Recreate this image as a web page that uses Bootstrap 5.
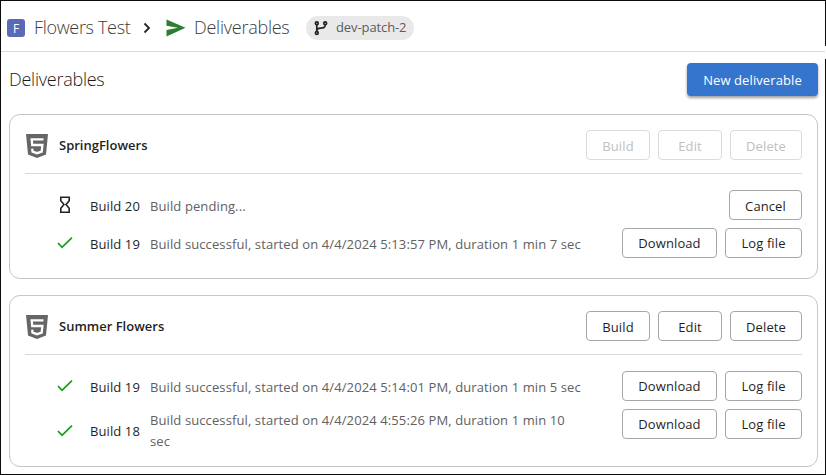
<!DOCTYPE html>
<html lang="en">
<head>
<meta charset="utf-8">
<meta name="viewport" content="width=device-width, initial-scale=1">
<title>Deliverables</title>
<link href="https://cdn.jsdelivr.net/npm/bootstrap@5.3.0/dist/css/bootstrap.min.css" rel="stylesheet">
<style>
body { font-family: "Open Sans", "Noto Sans", sans-serif; font-size: 13px; color: #1f1f1f; background: #fff; }
.frame { width: 826px; height: 475px; border: 1px solid #0b0b0b; border-right: 0; overflow: hidden; }
.edge { top: 0; right: 0; width: 1px; height: 100%; background: linear-gradient(#0b0b0b 45px, #fff 45px, #fff 58px, #0b0b0b 58px); }
.topbar { height: 51px; border-bottom: 1px solid #dadada; padding: 3px 0 0 6px; font-size: 18px; color: #3c3c3c; }
.project { width: 18px; height: 18px; border-radius: 3px; background: #5b6ab8; color: #fff; font-size: 12px; font-weight: 500; line-height: 19px; margin-right: 9px; }
.crumb { font-weight: 300; white-space: nowrap; line-height: 24px; margin-top: -1px; }
.crumb.first { width: 97px; letter-spacing: -.33px; }
.crumb.last { width: 96px; letter-spacing: -.25px; }
.sep { margin: 0 15px 0 12px; }
.chip { width: 108px; height: 24px; border-radius: 12px; background: #e9e9e9; margin-left: 16px; padding-left: 8px; font-size: 13px; color: #5c5c5c; }
.chip-name { padding-top: 1px; letter-spacing: -.1px; }
.pagehead { padding: 11px 8px 0 8px; height: 62px; }
.pagehead h1 { font-size: 18px; font-weight: 300; line-height: 32px; margin: 0; color: #1c1c1c; letter-spacing: -.25px; }
.btn { --bs-btn-font-size: 13px; --bs-btn-padding-x: 0; --bs-btn-padding-y: 0; --bs-btn-border-radius: 4px; line-height: 28px; height: 30px; white-space: nowrap; letter-spacing: .1px; }
.btn-main { width: 131px; height: 33px; line-height: 34px; --bs-btn-border-width: 0; --bs-btn-color: #fff; --bs-btn-bg: #3575cd; --bs-btn-hover-bg: #2c66b7; --bs-btn-hover-color: #fff; box-shadow: 0 2px 3px rgba(0,0,0,.38); }
.btn-line { --bs-btn-color: #1f1f1f; --bs-btn-bg: #fff; --bs-btn-border-color: #a6a6a6; --bs-btn-hover-border-color: #777; --bs-btn-disabled-color: #c0c0c0; --bs-btn-disabled-border-color: #dcdcdc; --bs-btn-disabled-opacity: 1; }
.panel-top .btn, .btn.w73 { line-height: 30px; }
.w64 { width: 64px; } .w72 { width: 72px; } .w73 { width: 73px; } .w77 { width: 77px; } .w95 { width: 95px; }
.panel { margin: 0 8px 16px; border: 1px solid #c6c6c6; border-radius: 11px; padding: 15px; }
.panel-a { height: 165px; } .panel-b { height: 172px; }
.panel-top { height: 44px; border-bottom: 1px solid #dadada; margin-bottom: 16px; }
.panel-top svg { margin-top: 3px; }
.panel-top h2 { font-size: 13px; font-weight: 600; line-height: 30px; margin: 0 0 0 10px; }
.build { padding-left: 30px; min-height: 30px; margin-bottom: 8px; }
.build-name { width: 60px; margin-left: 15px; line-height: 21px; letter-spacing: .1px; padding-top: 2px; }
.build-note { line-height: 21px; color: #616161; width: 436px; letter-spacing: .105px; padding-top: 2px; }
.build .tick { flex: none; }
.tall .build-note, .tall .build-name { padding-top: 1px; }
</style>
</head>
<body>
<div class="frame position-relative">
  <div class="edge position-absolute"></div>
  <header class="topbar d-flex align-items-center">
    <span class="project text-center">F</span>
    <span class="crumb first">Flowers Test</span>
    <svg class="sep" width="8" height="12" viewBox="0 0 8 12" fill="none" stroke="#242424" stroke-width="1.8"><path d="M1.5 1.5 6 6 1.5 10.5"/></svg>
    <svg width="20" height="18" viewBox="0 0 20 18" fill="#2e7d32"><path d="M.5.5 19.5 8.7.5 17.5V11L12 8.8.5 6.8z"/></svg>
    <span class="crumb last ms-2">Deliverables</span>
    <span class="chip d-flex align-items-center">
      <svg width="14" height="16" viewBox="0 0 14 16" fill="none" stroke="#242424" stroke-width="1.7"><circle cx="2.8" cy="3.2" r="1.4"/><circle cx="11.2" cy="3.2" r="1.4"/><circle cx="2.8" cy="13" r="1.4"/><path d="M2.8 4.6v7M11.2 4.6c0 3.4-2 3.4-4.600 3.500-2.200.1-3.800.7-3.800 3"/></svg>
      <span class="chip-name ms-2">dev-patch-2</span>
    </span>
  </header>
  <main>
    <div class="pagehead d-flex justify-content-between align-items-start">
      <h1>Deliverables</h1>
      <button class="btn btn-main" type="button">New deliverable</button>
    </div>
    <section class="panel panel-a">
      <div class="panel-top d-flex align-items-start">
        <svg width="24" height="26" viewBox="0 0 24 26"><path fill="#666" d="M1 1h22l-2 20.500-9 3.500-9-3.500z"/><path fill="none" stroke="#fff" stroke-width="2.300" d="M18.500 6.300H6.700l.5 5.700h10.200l-.7 6.700-4.700 1.500-4.500-1.500-.3-3"/></svg>
        <h2>SpringFlowers</h2>
        <div class="d-flex gap-2 ms-auto">
          <button class="btn btn-line w64" disabled>Build</button>
          <button class="btn btn-line w64" disabled>Edit</button>
          <button class="btn btn-line w72" disabled>Delete</button>
        </div>
      </div>
      <div class="build d-flex">
        <div class="build-main d-flex align-items-center">
          <svg class="tick" width="20" height="18" viewBox="0 0 20 18" fill="none" stroke="#242424" stroke-width="1.600"><path d="M5.800 1.300h8.400v3.400L11 8.500l3.200 3.800v3.900H5.800v-3.900L9 8.500 5.800 4.700z"/></svg>
          <div class="build-name">Build 20</div><div class="build-note">Build pending...</div>
        </div>
        <div class="ms-auto"><button class="btn btn-line w73">Cancel</button></div>
      </div>
      <div class="build d-flex">
        <div class="build-main d-flex align-items-center">
          <svg class="tick" width="20" height="18" viewBox="0 0 20 18" fill="none" stroke="#169c16" stroke-width="1.700"><path d="m3 9 4 4.300 10-9.600"/></svg>
          <div class="build-name">Build 19</div><div class="build-note">Build successful, started on 4/4/2024 5:13:57 PM, duration 1 min 7 sec</div>
        </div>
        <div class="d-flex gap-2 ms-auto"><button class="btn btn-line w95">Download</button><button class="btn btn-line w77">Log file</button></div>
      </div>
    </section>
    <section class="panel panel-b">
      <div class="panel-top d-flex align-items-start">
        <svg width="24" height="26" viewBox="0 0 24 26"><path fill="#666" d="M1 1h22l-2 20.500-9 3.500-9-3.500z"/><path fill="none" stroke="#fff" stroke-width="2.300" d="M18.500 6.300H6.700l.5 5.700h10.200l-.7 6.700-4.700 1.500-4.500-1.500-.3-3"/></svg>
        <h2>Summer Flowers</h2>
        <div class="d-flex gap-2 ms-auto">
          <button class="btn btn-line w64">Build</button>
          <button class="btn btn-line w64">Edit</button>
          <button class="btn btn-line w72">Delete</button>
        </div>
      </div>
      <div class="build d-flex">
        <div class="build-main d-flex align-items-center">
          <svg class="tick" width="20" height="18" viewBox="0 0 20 18" fill="none" stroke="#169c16" stroke-width="1.700"><path d="m3 9 4 4.300 10-9.600"/></svg>
          <div class="build-name">Build 19</div><div class="build-note">Build successful, started on 4/4/2024 5:14:01 PM, duration 1 min 5 sec</div>
        </div>
        <div class="d-flex gap-2 ms-auto"><button class="btn btn-line w95">Download</button><button class="btn btn-line w77">Log file</button></div>
      </div>
      <div class="build tall d-flex">
        <div class="build-main d-flex align-items-center">
          <svg class="tick" width="20" height="18" viewBox="0 0 20 18" fill="none" stroke="#169c16" stroke-width="1.700"><path d="m3 9 4 4.300 10-9.600"/></svg>
          <div class="build-name">Build 18</div><div class="build-note">Build successful, started on 4/4/2024 4:55:26 PM, duration 1 min 10 sec</div>
        </div>
        <div class="d-flex gap-2 ms-auto"><button class="btn btn-line w95">Download</button><button class="btn btn-line w77">Log file</button></div>
      </div>
    </section>
  </main>
</div>
<script src="https://cdn.jsdelivr.net/npm/bootstrap@5.3.0/dist/js/bootstrap.bundle.min.js"></script>
</body>
</html>
